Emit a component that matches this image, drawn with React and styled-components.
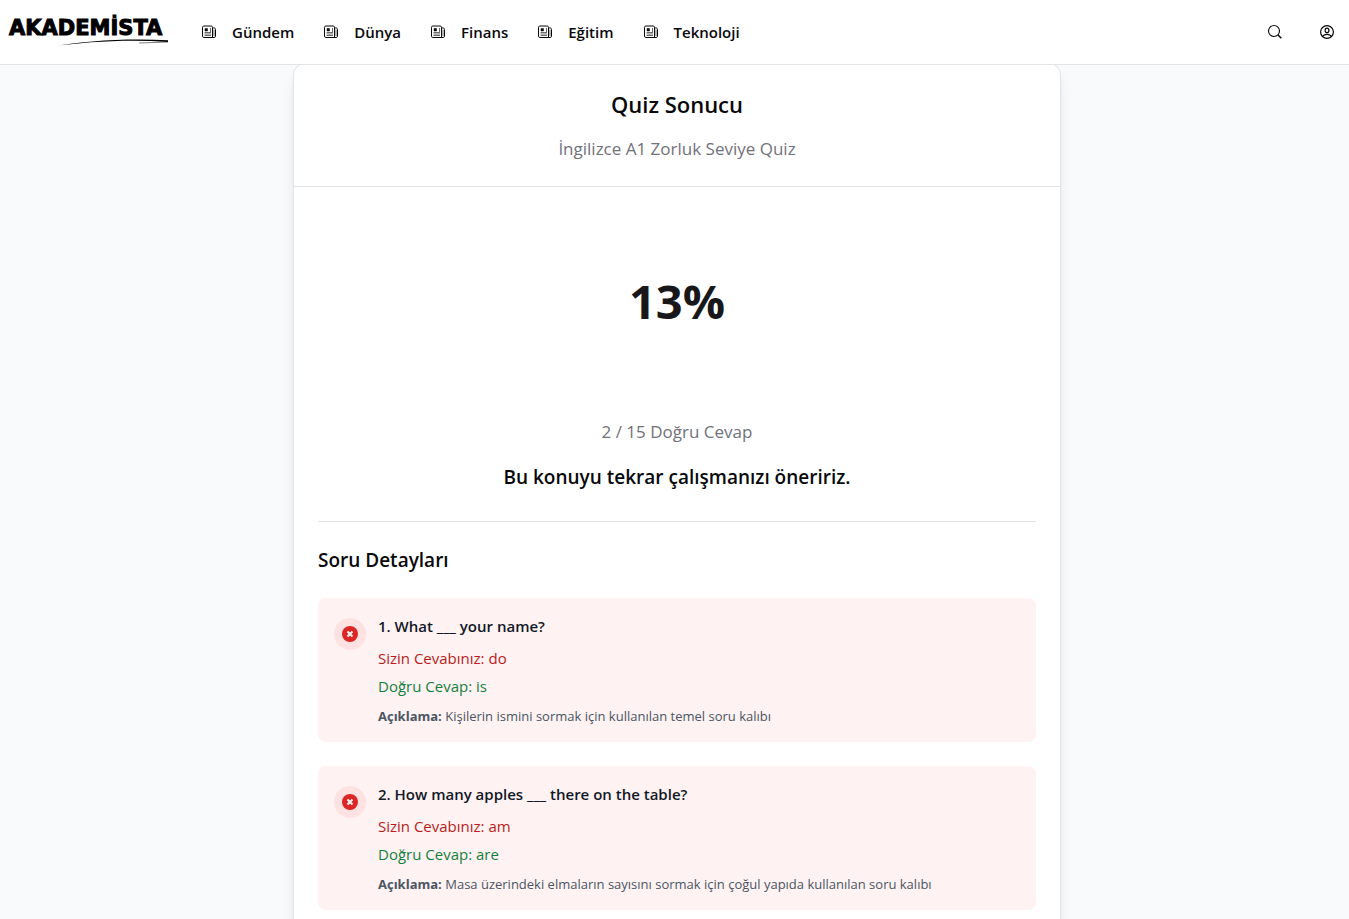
import React from 'react';
import styled, { createGlobalStyle } from 'styled-components';

const GlobalStyle = createGlobalStyle`
    * {
        box-sizing: border-box;
    }

    body {
        margin: 0;
        background: #f9fafb;
        color: #09090b;
        font-family: "Segoe UI", "Open Sans", "Noto Sans", sans-serif;
        font-size: 15px;
        line-height: 24px;
        overflow-x: hidden;
    }

    h1, h2, h3, p, ul, ol {
        margin: 0;
        padding: 0;
    }
`;

const Header = styled.header`
    position: sticky;
    top: 0;
    z-index: 1;
    display: flex;
    align-items: center;
    height: 65px;
    padding: 0 14px 0 9px;
    background: #fff;
    border-bottom: 1px solid #e4e4e7;
`;

const Logo = styled.a`
    display: flex;
    flex-direction: column;
    width: 160px;
    color: #000;
    font-family: "DejaVu Sans", sans-serif;
    font-size: 21px;
    font-weight: 700;
    line-height: 22px;
    text-decoration: none;
    -webkit-text-stroke: 1px #000;
`;

const Swoosh = styled.svg`
    display: block;
    width: 118px;
    height: 8px;
    margin-left: 42px;
`;

const Nav = styled.nav`
    display: flex;
    gap: 30px;
    margin-left: 33px;
`;

const NavLink = styled.a`
    display: flex;
    align-items: center;
    gap: 16px;
    color: #09090b;
    font-weight: 600;
    text-decoration: none;
`;

const Actions = styled.div`
    display: flex;
    gap: 36px;
    margin-left: auto;
`;

const IconButton = styled.button`
    display: flex;
    padding: 0;
    border: 0;
    background: none;
    color: #09090b;
    cursor: pointer;
`;

const Main = styled.main`
    padding-left: 5px;
`;

const Card = styled.section`
    max-width: 768px;
    margin: -2px auto 0;
    background: #fff;
    border: 1px solid #e4e4e7;
    border-radius: 12px;
    box-shadow: 0 10px 15px -3px rgba(0, 0, 0, 0.1), 0 4px 6px -4px rgba(0, 0, 0, 0.1);
`;

const CardHeader = styled.div`
    padding: 24px 24px 22px;
    text-align: center;
    border-bottom: 1px solid #e4e4e7;
`;

const Title = styled.h1`
    margin-bottom: 14px;
    font-size: 22px;
    font-weight: 600;
    line-height: 32px;
`;

const Muted = styled.p`
    color: #71717a;
    font-size: 17px;
    line-height: 30px;
`;

const CardBody = styled.div`
    padding: 24px;
`;

const Summary = styled.div`
    display: flex;
    flex-direction: column;
    gap: 16px;
    padding-bottom: 30px;
    text-align: center;
    border-bottom: 1px solid #e4e4e7;
`;

const Score = styled.div`
    display: flex;
    align-items: center;
    justify-content: center;
    height: 180px;
    margin-bottom: 10px;
    color: #18181b;
    font-size: 47px;
    font-weight: 700;
`;

const Message = styled.p`
    font-size: 19px;
    font-weight: 600;
    line-height: 28px;
`;

const SectionTitle = styled.h2`
    margin: 24px 0;
    font-size: 19px;
    font-weight: 600;
    line-height: 28px;
`;

const QuestionList = styled.ol`
    display: flex;
    flex-direction: column;
    gap: 24px;
    list-style: none;
`;

const Question = styled.li`
    display: flex;
    gap: 12px;
    padding: 16px;
    background: #fef2f2;
    border-radius: 8px;
`;

const Badge = styled.span`
    display: flex;
    flex-shrink: 0;
    align-items: center;
    justify-content: center;
    width: 32px;
    height: 32px;
    margin-top: 4px;
    border-radius: 50%;
    background: #fee2e2;
`;

const QuestionTitle = styled.h3`
    margin-bottom: 8px;
    color: #111827;
    font-size: 15px;
    font-weight: 600;
`;

const Answer = styled.p`
    margin-bottom: 4px;
    color: ${({ $correct }) => ($correct ? '#15803d' : '#b91c1c')};
`;

const Explanation = styled.p`
    margin-top: 8px;
    color: #4b5563;
    font-size: 13px;
    line-height: 20px;
`;

const NewsIcon = () => (
    <svg width="14" height="14" viewBox="0 0 14 14" fill="none" stroke="currentColor" aria-hidden="true">
        <path d="M10.5 12.5V2.3C10.5 1.500 10 1 9.200 1H1.800C1 1 .5 1.500.5 2.300v8.900c0 .8.5 1.300 1.300 1.300h10.400c.8 0 1.300-.5 1.300-1.300V4.400c0-1-.7-1.500-1.700-1.500h-1.200" />
        <path d="M3 3.500h2.500V6H3z" fill="currentColor" strokeWidth=".5" />
        <path d="M8.500 3v4M2.500 7.500H9M2.500 9H9M2.500 10.500H9M12 4.500v6.500" strokeWidth="1" opacity=".6" />
    </svg>
);

const SearchIcon = () => (
    <svg width="16" height="16" viewBox="0 0 16 16" fill="none" stroke="currentColor" strokeWidth="1.1" aria-hidden="true">
        <circle cx="7" cy="7" r="5.5" />
        <path d="M11 11l3.300 3.300" strokeWidth="1.5" />
    </svg>
);

const ProfileIcon = () => (
    <svg width="16" height="16" viewBox="0 0 16 16" fill="none" stroke="currentColor" strokeWidth="1.2" aria-hidden="true">
        <circle cx="8" cy="8" r="6.4" />
        <ellipse cx="8" cy="6.4" rx="1.9" ry="2.2" />
        <path d="M3.700 12.500C4.500 10.800 6 10.300 8 10.300s3.500.5 4.300 2.200" />
    </svg>
);

const WrongIcon = () => (
    <svg width="16" height="16" viewBox="0 0 16 16" aria-hidden="true">
        <circle cx="8" cy="8" r="8" fill="#dc2626" />
        <path d="M5.500 5.500l5 5M10.500 5.500l-5 5" stroke="#fef2f2" strokeWidth="2.1" />
    </svg>
);

const links = ['Gündem', 'Dünya', 'Finans', 'Eğitim', 'Teknoloji'];

const questions = [
    {
        text: 'What ___ your name?',
        given: 'do',
        correct: 'is',
        explanation: 'Kişilerin ismini sormak için kullanılan temel soru kalıbı',
    },
    {
        text: 'How many apples ___ there on the table?',
        given: 'am',
        correct: 'are',
        explanation: 'Masa üzerindeki elmaların sayısını sormak için çoğul yapıda kullanılan soru kalıbı',
    },
];

function App() {
    return (
        <>
            <GlobalStyle />
            <Header>
                <Logo href="/">
                    AKADEMİSTA
                    <Swoosh viewBox="0 0 118 8" aria-hidden="true">
                        <path d="M0 7.800C32 1.500 78-1 117 1.200v1.800C78 .3 36 2.500 0 7.800Z" fill="#000" />
                        <path d="M88 4l29-1" stroke="#000" strokeWidth="0.5" />
                    </Swoosh>
                </Logo>
                <Nav>
                    {links.map((label) => (
                        <NavLink key={label} href="#">
                            <NewsIcon />
                            {label}
                        </NavLink>
                    ))}
                </Nav>
                <Actions>
                    <IconButton type="button" aria-label="Ara"><SearchIcon /></IconButton>
                    <IconButton type="button" aria-label="Profil"><ProfileIcon /></IconButton>
                </Actions>
            </Header>
            <Main>
                <Card>
                    <CardHeader>
                        <Title>Quiz Sonucu</Title>
                        <Muted>İngilizce A1 Zorluk Seviye Quiz</Muted>
                    </CardHeader>
                    <CardBody>
                        <Summary>
                            <Score>13%</Score>
                            <Muted>2 / 15 Doğru Cevap</Muted>
                            <Message>Bu konuyu tekrar çalışmanızı öneririz.</Message>
                        </Summary>
                        <SectionTitle>Soru Detayları</SectionTitle>
                        <QuestionList>
                            {questions.map((question, index) => (
                                <Question key={question.text}>
                                    <Badge><WrongIcon /></Badge>
                                    <div>
                                        <QuestionTitle>{index + 1}. {question.text}</QuestionTitle>
                                        <Answer>Sizin Cevabınız: {question.given}</Answer>
                                        <Answer $correct>Doğru Cevap: {question.correct}</Answer>
                                        <Explanation><strong>Açıklama:</strong> {question.explanation}</Explanation>
                                    </div>
                                </Question>
                            ))}
                        </QuestionList>
                    </CardBody>
                </Card>
            </Main>
        </>
    );
}

export default App;
